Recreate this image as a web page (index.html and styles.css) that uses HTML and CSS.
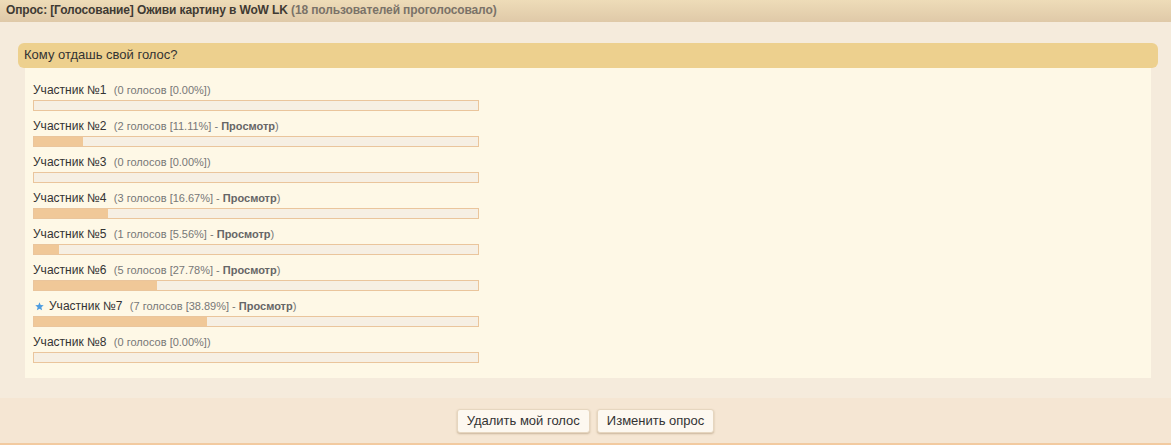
FILE: index.html
```html
<!DOCTYPE html>
<html lang="ru">
<head>
<meta charset="utf-8">
<title>Опрос</title>
<link rel="stylesheet" href="styles.css">
</head>
<body>
<div class="poll">
  <div class="poll-header">Опрос: [Голосование] Оживи картину в WoW LK <span class="muted">(18 пользователей проголосовало)</span></div>
  <div class="poll-body">
    <div class="question">Кому отдашь свой голос?</div>
    <div class="options">
      <div class="option">
        <div class="label">Участник №1 <span class="votes">(0 голосов [0.00%])</span></div>
        <div class="bar"><div class="fill" style="width:0%"></div></div>
      </div>
      <div class="option">
        <div class="label">Участник №2 <span class="votes">(2 голосов [11.11%] - <b>Просмотр</b>)</span></div>
        <div class="bar"><div class="fill" style="width:11.11%"></div></div>
      </div>
      <div class="option">
        <div class="label">Участник №3 <span class="votes">(0 голосов [0.00%])</span></div>
        <div class="bar"><div class="fill" style="width:0%"></div></div>
      </div>
      <div class="option">
        <div class="label">Участник №4 <span class="votes">(3 голосов [16.67%] - <b>Просмотр</b>)</span></div>
        <div class="bar"><div class="fill" style="width:16.67%"></div></div>
      </div>
      <div class="option">
        <div class="label">Участник №5 <span class="votes">(1 голосов [5.56%] - <b>Просмотр</b>)</span></div>
        <div class="bar"><div class="fill" style="width:5.56%"></div></div>
      </div>
      <div class="option">
        <div class="label">Участник №6 <span class="votes">(5 голосов [27.78%] - <b>Просмотр</b>)</span></div>
        <div class="bar"><div class="fill" style="width:27.78%"></div></div>
      </div>
      <div class="option">
        <div class="label"><svg class="star" width="9" height="9" viewBox="0 0 10 10"><polygon points="5,0.3 6.3,3.4 9.7,3.7 7.1,5.9 7.9,9.3 5,7.5 2.1,9.3 2.9,5.9 0.3,3.7 3.7,3.4" fill="#4f9de0"/></svg>Участник №7 <span class="votes">(7 голосов [38.89%] - <b>Просмотр</b>)</span></div>
        <div class="bar"><div class="fill" style="width:38.89%"></div></div>
      </div>
      <div class="option">
        <div class="label">Участник №8 <span class="votes">(0 голосов [0.00%])</span></div>
        <div class="bar"><div class="fill" style="width:0%"></div></div>
      </div>
    </div>
  </div>
  <div class="poll-footer">
    <button class="btn">Удалить мой голос</button>
    <button class="btn">Изменить опрос</button>
  </div>
</div>
</body>
</html>
```
FILE: styles.css
```css
html, body {
  margin: 0;
  padding: 0;
}
body {
  background: #f5ebdc;
  font-family: "Liberation Sans", Arial, sans-serif;
  color: #333;
}
.poll-header {
  height: 22px;
  line-height: 21px;
  padding-left: 6px;
  font-size: 12px;
  font-weight: bold;
  letter-spacing: -0.12px;
  color: #3f3a33;
  background: linear-gradient(#eedcb8, #dfc9a8);
  white-space: nowrap;
}
.poll-header .muted {
  color: #7a7268;
}
.poll-body {
  padding: 21px 13px 20px 18px;
}
.question {
  height: 25px;
  line-height: 24px;
  padding-left: 6px;
  font-size: 13px;
  color: #333;
  background: #edd08e;
  border-radius: 6px;
}
.options {
  margin: 0 7px;
  background: #fef8e6;
  padding: 14px 8px 15px;
}
.option {
  margin-bottom: 7px;
}
.option:last-child {
  margin-bottom: 0;
}
.label {
  height: 16px;
  line-height: 16px;
  font-size: 12px;
  color: #333;
  display: flex;
  align-items: center;
  white-space: pre;
}
.votes {
  font-size: 11px;
  color: #777;
  margin-left: 4px;
}
.votes b {
  color: #666;
}
.star {
  margin: 0 5px 0 2px;
}
.bar {
  margin-top: 2px;
  width: 444px;
  height: 9px;
  border: 1px solid #eac59c;
  background: #f6efe3;
}
.fill {
  height: 100%;
  background: #f0c898;
}
.poll-footer {
  height: 45px;
  display: flex;
  justify-content: center;
  align-items: center;
  gap: 7px;
  background: #f5e6d3;
  border-bottom: 2px solid #f2caa0;
}
.btn {
  height: 24px;
  padding: 0 9px;
  font-family: "Liberation Sans", Arial, sans-serif;
  font-size: 13px;
  color: #333;
  background: #fdf8f0;
  border: 1px solid #e6d6bf;
  border-radius: 3px;
  box-shadow: 0 1px 2px rgba(120, 90, 50, 0.35);
}
```
